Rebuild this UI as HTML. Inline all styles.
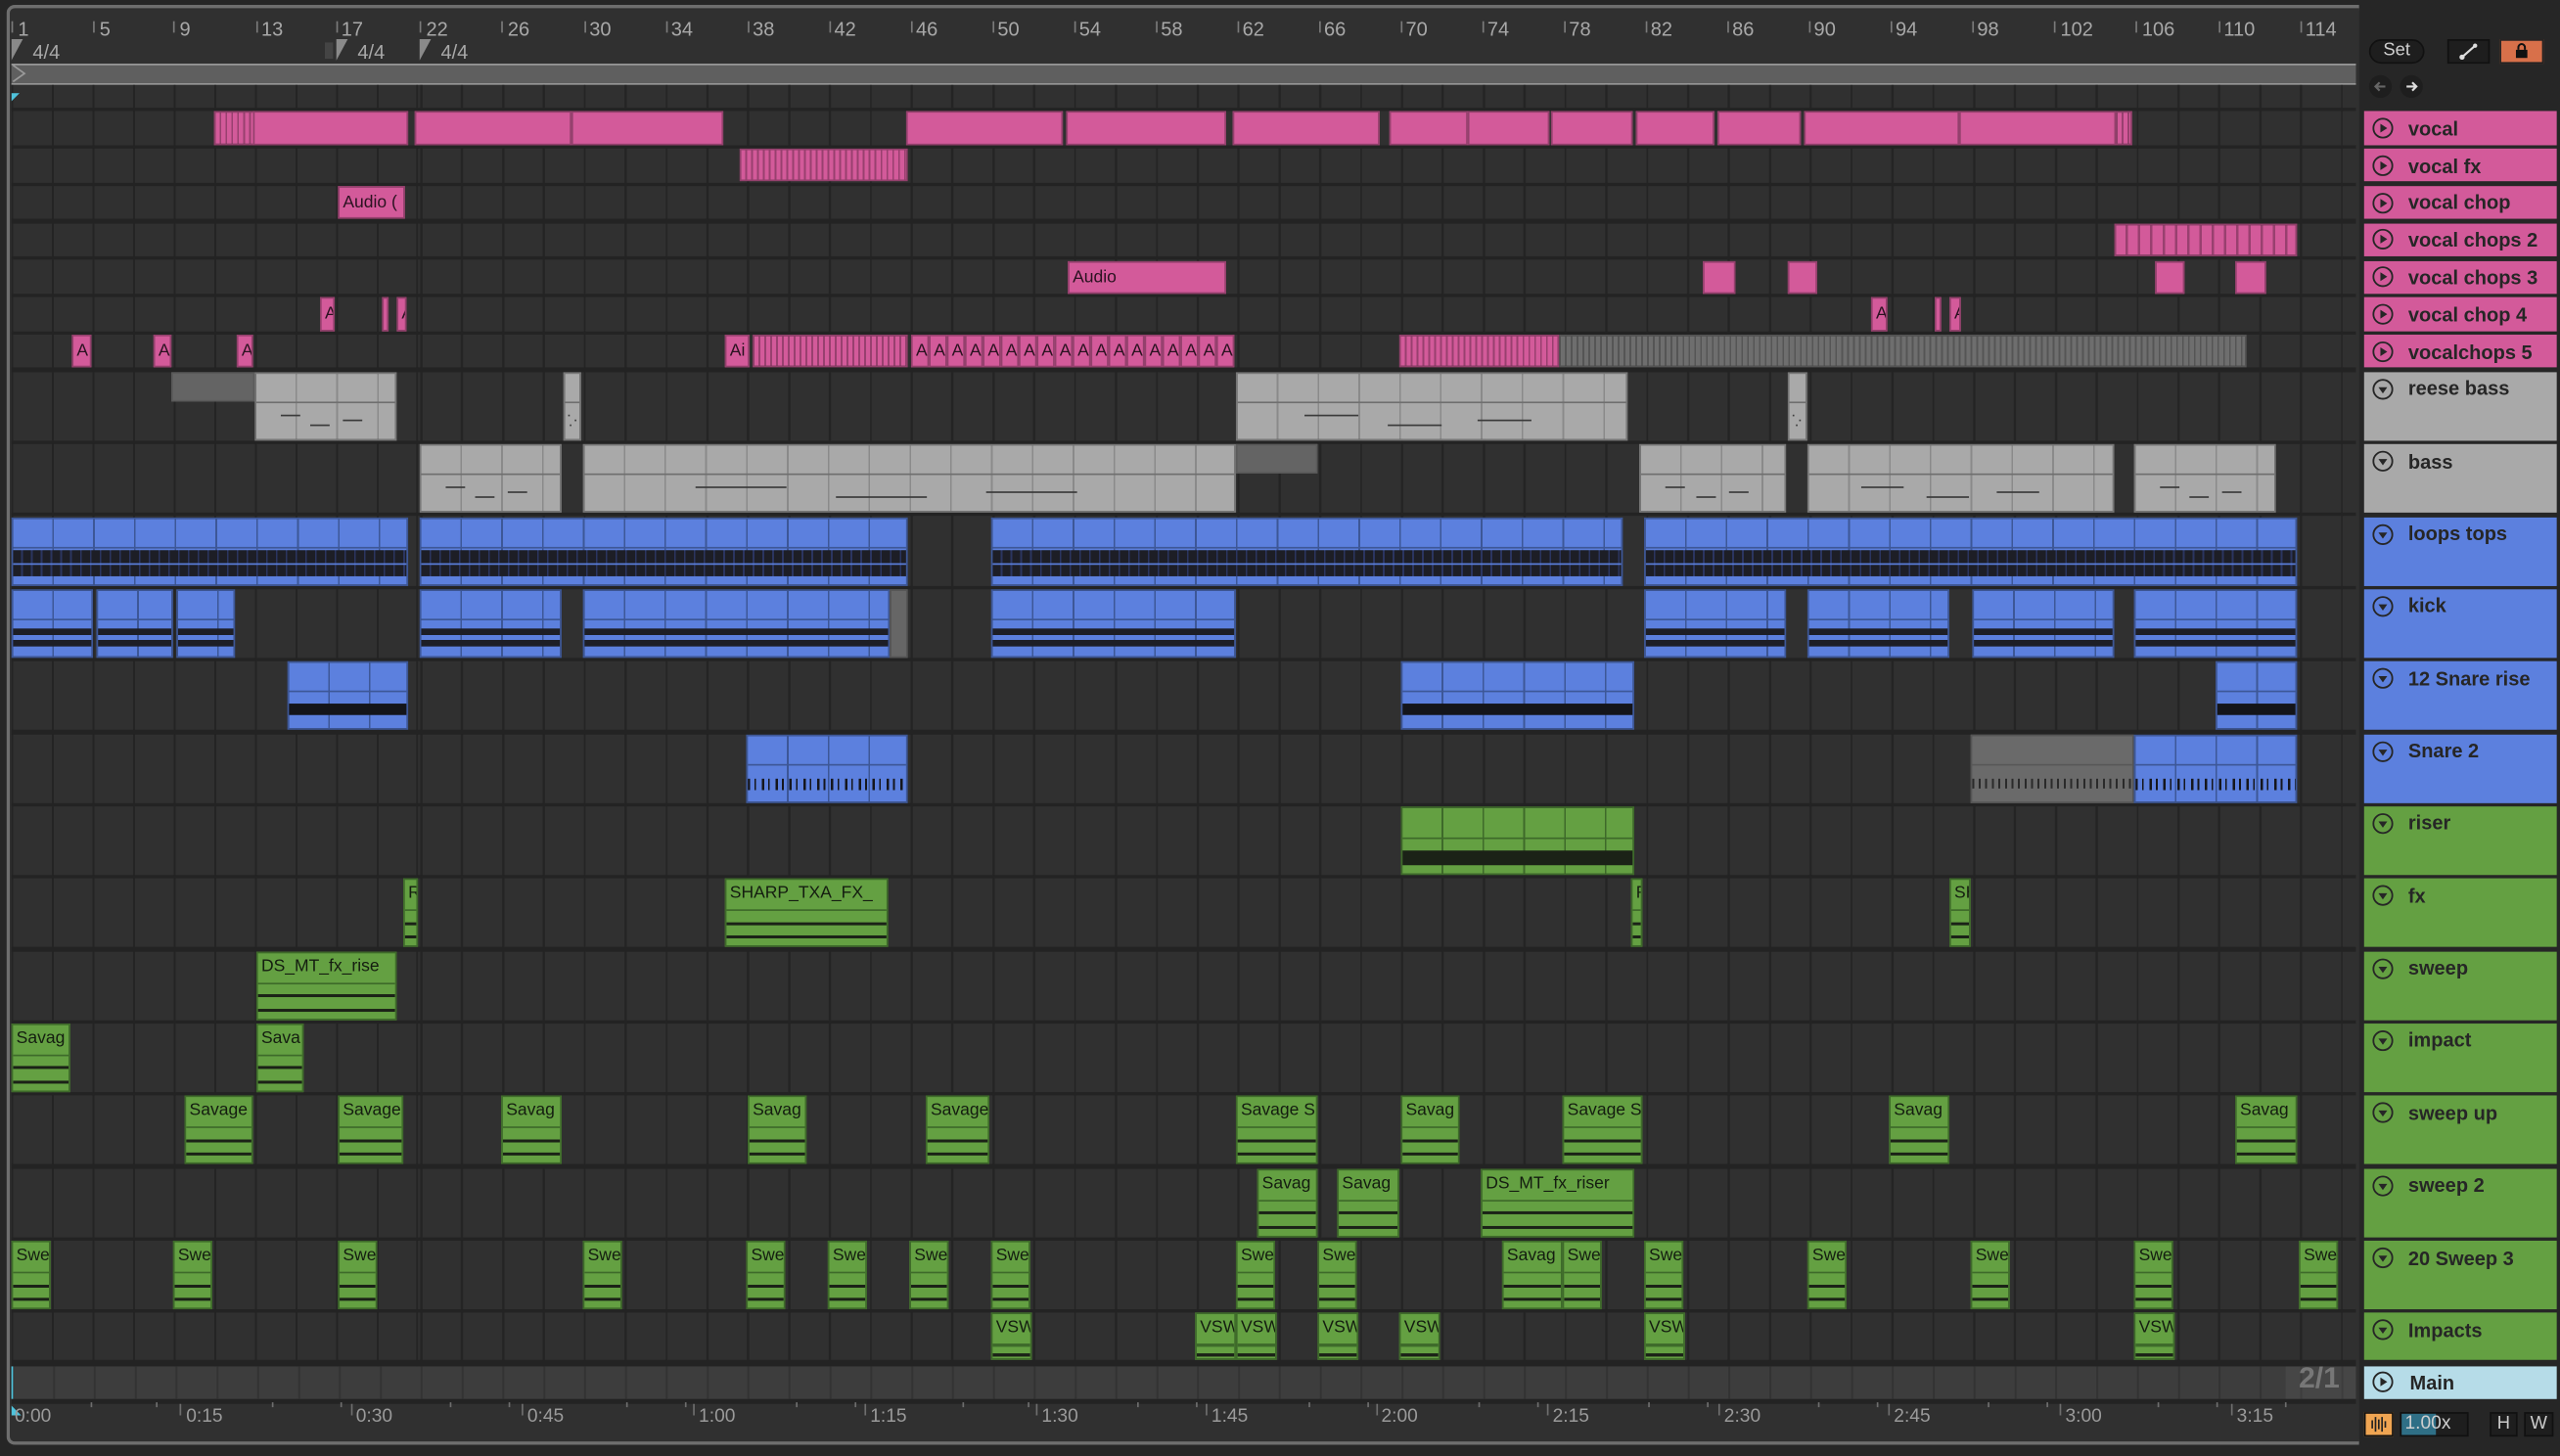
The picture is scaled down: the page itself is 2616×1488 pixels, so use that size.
<!DOCTYPE html>
<html><head><meta charset="utf-8"><style>
html,body{margin:0;padding:0;background:#262626;overflow:hidden}
#w{position:absolute;left:0;top:0;width:1568px;height:892px;transform:scale(1.66837);transform-origin:0 0;font-family:"Liberation Sans",sans-serif;background:#262626}
i{font-style:normal}
.frame{position:absolute;left:4px;top:3px;width:1441px;height:882px;border:2px solid #6e6e6e;border-right:none;border-radius:5px 0 0 5px;background:#303030;box-sizing:border-box}
.gl{position:absolute;top:52px;height:805px;background-color:#303030}
.gA{left:7px;width:248px;background-image:repeating-linear-gradient(90deg,#242424 0 1.2px,transparent 1.2px 24.85px)}
.gB{left:255px;width:1188px;background-image:repeating-linear-gradient(90deg,#242424 0 1.3px,transparent 1.3px 25.03px);background-position:2.4px 0}
.sep{position:absolute;left:7px;width:1436px;height:2.4px;background:#232323}
.r{position:absolute;left:0;width:1443px}
.c{position:absolute;top:0;bottom:0;box-sizing:border-box;overflow:hidden;white-space:nowrap;font-size:10.5px;padding-left:2px}
.c::after,.c::before{content:"";position:absolute;left:0;right:0;display:none}
.p{background:#d35a9a;border:1px solid #93406c;color:#2a1220;line-height:18px}
.ps{background:repeating-linear-gradient(90deg,#d35a9a 0 2.5px,#98406f 2.5px 3.6px);border:1px solid #93406c}
.gs{background:repeating-linear-gradient(90deg,#6e6e6e 0 2.5px,#555 2.5px 3.6px);border:1px solid #555}
.gr{background:linear-gradient(#6f6f6f,#6f6f6f) 0 17px/100% 1.2px no-repeat,linear-gradient(#3a3a3a,#3a3a3a) 20% 25px/14% 1px no-repeat,linear-gradient(#3a3a3a,#3a3a3a) 45% 31px/14% 1px no-repeat,linear-gradient(#3a3a3a,#3a3a3a) 72% 28px/14% 1px no-repeat,repeating-linear-gradient(90deg,#a9a9a9 0 24px,#8a8a8a 24px 25px);border:1px solid #777}
.dg{background:#646464;bottom:auto;height:18px;border:1px solid #5a5a5a}
.b,.k,.sn,.s2{background:repeating-linear-gradient(90deg,#5c80de 0 24px,#3d5797 24px 25px);border:1px solid #3d5797}
.b::before,.k::before,.sn::before,.s2::before,.s2g::before,.g::before,.gri::before{display:block;top:17px;height:1.2px;background:#3d5797}
.g::before,.gri::before{top:18px;background:#3e6a2a}
.s2g::before{background:#585858}
.b::after{display:block;top:19.5px;height:16px;background:linear-gradient(#5c80de,#5c80de) 0 7.5px/100% 1px no-repeat,repeating-linear-gradient(90deg,#1d1e26 0 5px,#2b3560 5px 6px)}
.k::after{display:block;top:23.5px;height:11px;background:linear-gradient(#1d1e26,#1d1e26) 0 0/100% 4px no-repeat,linear-gradient(#1d1e26,#1d1e26) 0 7px/100% 4px no-repeat}
.sn::after{display:block;top:25px;height:7px;background:#14151a}
.s2::after{display:block;top:26px;height:7px;background:repeating-linear-gradient(90deg,#15161c 0 1.5px,transparent 1.5px 4px,#15161c 4px 5px,transparent 5px 8.5px)}
.s2g{background:#6a6a6a;border:1px solid #555}
.s2g::after{display:block;top:26px;height:6px;background:repeating-linear-gradient(90deg,#2a2a2a 0 1.2px,transparent 1.2px 4px)}
.kg{background:#666;border:1px solid #555}
.g{background:#64a042;border:1px solid #3e6a2a;color:#141d10;line-height:17px}
.g::after{display:block;top:25.5px;height:10.5px;background:linear-gradient(#1b2217,#1b2217) 0 0/100% 1.8px no-repeat,linear-gradient(#1b2217,#1b2217) 0 8.5px/100% 1.8px no-repeat}
.gri{background:repeating-linear-gradient(90deg,#64a042 0 24px,#3e6a2a 24px 25px);border:1px solid #3e6a2a}
.gri::after{display:block;top:26px;height:9px;background:#1b2217}
.im .g::after{top:23.5px;height:1.8px;background:#1b2217}
.h{position:absolute;left:1448px;width:118px;box-sizing:border-box;color:#262626;font-size:12px;font-weight:bold}
.h svg{position:absolute;left:5px;width:13px;height:13px}
.h span{position:absolute;left:27px}
.hp{background:#d35a9a}.hg{background:#a9a9a9}.hb{background:#5c80de}.hn{background:#64a042}
.bn{position:absolute;top:11px;font-size:12px;color:#a8a8a8}
.bt{position:absolute;top:13px;width:1px;height:7px;background:#7a7a7a}
.tl{position:absolute;top:862px;font-size:11.5px;color:#9a9a9a}
</style></head><body><div id="w">
<div class="frame"></div>
<div style="position:absolute;left:7px;top:38.5px;width:1436px;height:13px;background:#5f5f5f;border-top:1.3px solid #9a9a9a;border-bottom:1.3px solid #9a9a9a;box-sizing:border-box"></div>
<svg style="position:absolute;left:7px;top:39px" width="10" height="12"><path d="M1 1 L8 6 L1 11" fill="none" stroke="#9a9a9a" stroke-width="1"/></svg>
<div class="gl gA"></div><div class="gl gB"></div>
<div style="position:absolute;left:254.6px;top:52px;width:1px;height:805px;background:#242424"></div>
<div class="sep" style="top:65.9px"></div><div class="sep" style="top:88.7px"></div><div class="sep" style="top:111.5px"></div><div class="sep" style="top:134.3px"></div><div class="sep" style="top:157.1px"></div><div class="sep" style="top:179.9px"></div><div class="sep" style="top:202.7px"></div><div class="sep" style="top:225.4px"></div>
<div class="sep" style="top:269.8px"></div><div class="sep" style="top:314.1px"></div><div class="sep" style="top:358.5px"></div><div class="sep" style="top:402.8px"></div><div class="sep" style="top:447.2px"></div><div class="sep" style="top:491.5px"></div><div class="sep" style="top:535.9px"></div><div class="sep" style="top:580.2px"></div><div class="sep" style="top:624.6px"></div><div class="sep" style="top:668.9px"></div><div class="sep" style="top:713.3px"></div><div class="sep" style="top:757.6px"></div><div class="sep" style="top:802px"></div><div class="sep" style="top:833.2px;height:3.6px"></div>
<div style="position:absolute;left:7px;top:836.8px;width:1436px;height:20.3px;background-color:#3d3d3d;background-image:repeating-linear-gradient(90deg,#333 0 1.2px,transparent 1.2px 25.03px);background-position:0.4px 0"></div>
<div style="position:absolute;left:1400px;top:836.8px;width:43px;height:20.3px;background:rgba(255,255,255,0.05)"></div>
<div style="position:absolute;left:1408px;top:834px;font-size:18px;font-weight:bold;color:#777">2/1</div>
<div style="position:absolute;left:7px;top:836.8px;width:1.3px;height:20.3px;background:#4fc3dc"></div>
<div style="position:absolute;left:7px;top:857.1px;width:1436px;height:2.5px;background:#232323"></div>
<svg style="position:absolute;left:7px;top:57px" width="6" height="6"><path d="M0 0 L5 0 L0 5Z" fill="#4fc3dc"/></svg>
<svg style="position:absolute;left:7px;top:861px" width="7" height="7"><path d="M0 0 L6 6 L0 6Z" fill="#4fc3dc"/></svg>

<div class="bt" style="left:7px"></div><div class="bn" style="left:11px">1</div>
<div class="bt" style="left:57px"></div><div class="bn" style="left:61px">5</div>
<div class="bt" style="left:106px"></div><div class="bn" style="left:110px">9</div>
<div class="bt" style="left:156.6px"></div><div class="bn" style="left:160px">13</div>
<div class="bt" style="left:205.8px"></div><div class="bn" style="left:209px">17</div>
<div class="bt" style="left:257.4px"></div><div class="bn" style="left:261px">22</div>
<div class="bt" style="left:307.4px"></div><div class="bn" style="left:311px">26</div>
<div class="bt" style="left:357.5px"></div><div class="bn" style="left:361px">30</div>
<div class="bt" style="left:407.5px"></div><div class="bn" style="left:411px">34</div>
<div class="bt" style="left:457.6px"></div><div class="bn" style="left:461px">38</div>
<div class="bt" style="left:507.6px"></div><div class="bn" style="left:511px">42</div>
<div class="bt" style="left:557.7px"></div><div class="bn" style="left:561px">46</div>
<div class="bt" style="left:607.7px"></div><div class="bn" style="left:611px">50</div>
<div class="bt" style="left:657.8px"></div><div class="bn" style="left:661px">54</div>
<div class="bt" style="left:707.8px"></div><div class="bn" style="left:711px">58</div>
<div class="bt" style="left:757.9px"></div><div class="bn" style="left:761px">62</div>
<div class="bt" style="left:807.9px"></div><div class="bn" style="left:811px">66</div>
<div class="bt" style="left:858px"></div><div class="bn" style="left:861px">70</div>
<div class="bt" style="left:908px"></div><div class="bn" style="left:911px">74</div>
<div class="bt" style="left:958.1px"></div><div class="bn" style="left:961px">78</div>
<div class="bt" style="left:1008.1px"></div><div class="bn" style="left:1011px">82</div>
<div class="bt" style="left:1058.2px"></div><div class="bn" style="left:1061px">86</div>
<div class="bt" style="left:1108.2px"></div><div class="bn" style="left:1111px">90</div>
<div class="bt" style="left:1158.3px"></div><div class="bn" style="left:1161px">94</div>
<div class="bt" style="left:1208.3px"></div><div class="bn" style="left:1211px">98</div>
<div class="bt" style="left:1258.4px"></div><div class="bn" style="left:1262px">102</div>
<div class="bt" style="left:1308.4px"></div><div class="bn" style="left:1312px">106</div>
<div class="bt" style="left:1358.5px"></div><div class="bn" style="left:1362px">110</div>
<div class="bt" style="left:1408.5px"></div><div class="bn" style="left:1412px">114</div>
<svg style="position:absolute;left:7px;top:24px" width="300" height="14"><path d="M0 0 L7 0 L0 13Z" fill="#8a8a8a"/><path d="M199 0 L206 0 L199 13Z" fill="#8a8a8a"/><path d="M250 0 L257 0 L250 13Z" fill="#8a8a8a"/><path d="M192 2 L197 2 L197 12 L192 12Z" fill="#444"/></svg>
<div class="bn" style="left:20px;top:25px">4/4</div><div class="bn" style="left:219px;top:25px">4/4</div><div class="bn" style="left:270px;top:25px">4/4</div>

<div class="r" style="top:68.3px;height:20.4px">
<i class="c ps" style="left:131px;width:25px"></i><i class="c p" style="left:155px;width:95px"></i><i class="c p" style="left:254px;width:96px"></i><i class="c p" style="left:350px;width:93px"></i><i class="c p" style="left:555px;width:96px"></i><i class="c p" style="left:653px;width:98px"></i><i class="c p" style="left:755px;width:90px"></i><i class="c p" style="left:851px;width:48px"></i><i class="c p" style="left:899px;width:50px"></i><i class="c p" style="left:950px;width:50px"></i><i class="c p" style="left:1002px;width:48px"></i><i class="c p" style="left:1052px;width:51px"></i><i class="c p" style="left:1105px;width:95px"></i><i class="c p" style="left:1200px;width:96px"></i><i class="c ps" style="left:1296px;width:10px"></i></div>
<div class="r" style="top:91.1px;height:20.4px"><i class="c ps" style="left:453px;width:103px"></i></div>
<div class="r" style="top:113.9px;height:20.4px"><i class="c p" style="left:207px;width:41px">Audio (</i></div>
<div class="r" style="top:136.7px;height:20.4px"><i class="c ps" style="left:1295px;width:112px;background:repeating-linear-gradient(90deg,#d35a9a 0 6px,#98406f 6px 7.5px)"></i></div>
<div class="r" style="top:159.5px;height:20.4px"><i class="c p" style="left:654px;width:97px">Audio</i><i class="c p" style="left:1043px;width:20px"></i><i class="c p" style="left:1095px;width:18px"></i><i class="c p" style="left:1320px;width:18px"></i><i class="c p" style="left:1369px;width:19px"></i></div>
<div class="r" style="top:182.2px;height:20.4px"><i class="c p" style="left:196px;width:9px">A</i><i class="c p" style="left:234px;width:4px"></i><i class="c p" style="left:243px;width:6px">A</i><i class="c p" style="left:1146px;width:10px">A</i><i class="c p" style="left:1185px;width:4px"></i><i class="c p" style="left:1194px;width:7px">A</i></div>
<div class="r" style="top:205px;height:20.4px"><i class="c p" style="left:44px;width:12px">A</i><i class="c p" style="left:94px;width:11px">A</i><i class="c p" style="left:145px;width:10px">A</i><i class="c p" style="left:444px;width:15px">Ai</i><i class="c ps" style="left:461px;width:95px"></i>
<i class="c p" style="left:558px;width:11px">A</i><i class="c p" style="left:569px;width:11px">A</i><i class="c p" style="left:580px;width:11px">A</i><i class="c p" style="left:591px;width:11px">A</i><i class="c p" style="left:602px;width:11px">A</i><i class="c p" style="left:613px;width:11px">A</i><i class="c p" style="left:624px;width:11px">A</i><i class="c p" style="left:635px;width:11px">A</i><i class="c p" style="left:646px;width:11px">A</i><i class="c p" style="left:657px;width:11px">A</i><i class="c p" style="left:668px;width:11px">A</i><i class="c p" style="left:679px;width:11px">A</i><i class="c p" style="left:690px;width:11px">A</i><i class="c p" style="left:701px;width:11px">A</i><i class="c p" style="left:712px;width:11px">A</i><i class="c p" style="left:723px;width:11px">A</i><i class="c p" style="left:734px;width:11px">A</i><i class="c p" style="left:745px;width:11px">A</i>
<i class="c ps" style="left:857px;width:98px"></i><i class="c gs" style="left:955px;width:421px"></i></div>
<div class="r" style="top:227.8px;height:42px"><i class="c dg" style="left:105px;width:51px"></i><i class="c gr" style="left:156px;width:87px"></i><i class="c gr" style="left:345px;width:11px"></i><i class="c gr" style="left:757px;width:240px"></i><i class="c gr" style="left:1095px;width:12px"></i></div>
<div class="r" style="top:272.1px;height:42px"><i class="c gr" style="left:257px;width:87px"></i><i class="c gr" style="left:357px;width:400px"></i><i class="c dg" style="left:757px;width:50px"></i><i class="c gr" style="left:1004px;width:90px"></i><i class="c gr" style="left:1107px;width:188px"></i><i class="c gr" style="left:1307px;width:87px"></i></div>
<div class="r" style="top:316.5px;height:42px"><i class="c b" style="left:7px;width:243px"></i><i class="c b" style="left:257px;width:299px"></i><i class="c b" style="left:607px;width:387px"></i><i class="c b" style="left:1007px;width:400px"></i></div>
<div class="r" style="top:360.8px;height:42px"><i class="c k" style="left:7px;width:50px"></i><i class="c k" style="left:59px;width:47px"></i><i class="c k" style="left:108px;width:36px"></i><i class="c k" style="left:257px;width:87px"></i><i class="c k" style="left:357px;width:188px"></i><i class="c kg" style="left:545px;width:11px"></i><i class="c k" style="left:607px;width:150px"></i><i class="c k" style="left:1007px;width:87px"></i><i class="c k" style="left:1107px;width:87px"></i><i class="c k" style="left:1208px;width:87px"></i><i class="c k" style="left:1307px;width:100px"></i></div>
<div class="r" style="top:405.2px;height:42px"><i class="c sn" style="left:176px;width:74px"></i><i class="c sn" style="left:858px;width:143px"></i><i class="c sn" style="left:1357px;width:50px"></i></div>
<div class="r" style="top:449.5px;height:42px"><i class="c s2" style="left:457px;width:99px"></i><i class="c s2g" style="left:1207px;width:100px"></i><i class="c s2" style="left:1307px;width:100px"></i></div>
<div class="r" style="top:493.9px;height:42px"><i class="c gri" style="left:858px;width:143px"></i></div>
<div class="r" style="top:538.2px;height:42px"><i class="c g" style="left:247px;width:9px">R</i><i class="c g" style="left:444px;width:100px">SHARP_TXA_FX_</i><i class="c g" style="left:999px;width:7px">R</i><i class="c g" style="left:1194px;width:13px">SH</i></div>
<div class="r" style="top:582.6px;height:42px"><i class="c g" style="left:157px;width:86px">DS_MT_fx_rise</i></div>
<div class="r" style="top:626.9px;height:42px"><i class="c g" style="left:7px;width:36px">Savag</i><i class="c g" style="left:157px;width:29px">Sava</i></div>
<div class="r" style="top:671.3px;height:42px"><i class="c g" style="left:113px;width:42px">Savage</i><i class="c g" style="left:207px;width:40px">Savage</i><i class="c g" style="left:307px;width:37px">Savag</i><i class="c g" style="left:458px;width:36px">Savag</i><i class="c g" style="left:567px;width:39px">Savage</i><i class="c g" style="left:757px;width:50px">Savage S</i><i class="c g" style="left:858px;width:36px">Savag</i><i class="c g" style="left:957px;width:49px">Savage S</i><i class="c g" style="left:1157px;width:37px">Savag</i><i class="c g" style="left:1369px;width:38px">Savag</i></div>
<div class="r" style="top:715.7px;height:42px"><i class="c g" style="left:770px;width:37px">Savag</i><i class="c g" style="left:819px;width:38px">Savag</i><i class="c g" style="left:907px;width:94px">DS_MT_fx_riser</i></div>
<div class="r" style="top:760px;height:42px"><i class="c g" style="left:7px;width:24px">Swe</i><i class="c g" style="left:106px;width:24px">Swe</i><i class="c g" style="left:207px;width:24px">Swe</i><i class="c g" style="left:357px;width:24px">Swe</i><i class="c g" style="left:457px;width:24px">Swe</i><i class="c g" style="left:507px;width:24px">Swe</i><i class="c g" style="left:557px;width:24px">Swe</i><i class="c g" style="left:607px;width:24px">Swe</i><i class="c g" style="left:757px;width:24px">Swe</i><i class="c g" style="left:807px;width:24px">Swe</i><i class="c g" style="left:920px;width:37px">Savag</i><i class="c g" style="left:957px;width:24px">Swe</i><i class="c g" style="left:1007px;width:24px">Swe</i><i class="c g" style="left:1107px;width:24px">Swe</i><i class="c g" style="left:1207px;width:24px">Swe</i><i class="c g" style="left:1307px;width:24px">Swe</i><i class="c g" style="left:1408px;width:24px">Swe</i></div>
<div class="r im" style="top:804.4px;height:28.8px"><i class="c g" style="left:607px;width:25px">VSW</i><i class="c g" style="left:732px;width:25px">VSW</i><i class="c g" style="left:757px;width:25px">VSW</i><i class="c g" style="left:807px;width:25px">VSW</i><i class="c g" style="left:857px;width:25px">VSW</i><i class="c g" style="left:1007px;width:25px">VSW</i><i class="c g" style="left:1307px;width:25px">VSW</i></div>

<svg width="0" height="0" style="position:absolute"><defs>
<symbol id="pl" viewBox="0 0 13 13"><circle cx="6.5" cy="6.5" r="5.8" fill="none" stroke="#262626" stroke-width="1.1"/><path d="M5 3.8 L9.2 6.5 L5 9.2Z" fill="#262626"/></symbol>
<symbol id="dn" viewBox="0 0 13 13"><circle cx="6.5" cy="6.5" r="5.8" fill="none" stroke="#262626" stroke-width="1.1"/><path d="M3.8 5.2 L9.2 5.2 L6.5 9Z" fill="#262626"/></symbol>
</defs></svg>
<div class="h hp" style="top:68.3px;height:20.4px"><svg style="top:3.7px"><use href="#pl"/></svg><span style="top:3.5px">vocal</span></div>
<div class="h hp" style="top:91.1px;height:20.4px"><svg style="top:3.7px"><use href="#pl"/></svg><span style="top:3.5px">vocal fx</span></div>
<div class="h hp" style="top:113.9px;height:20.4px"><svg style="top:3.7px"><use href="#pl"/></svg><span style="top:3.5px">vocal chop</span></div>
<div class="h hp" style="top:136.7px;height:20.4px"><svg style="top:3.7px"><use href="#pl"/></svg><span style="top:3.5px">vocal chops 2</span></div>
<div class="h hp" style="top:159.5px;height:20.4px"><svg style="top:3.7px"><use href="#pl"/></svg><span style="top:3.5px">vocal chops 3</span></div>
<div class="h hp" style="top:182.2px;height:20.4px"><svg style="top:3.7px"><use href="#pl"/></svg><span style="top:3.5px">vocal chop 4</span></div>
<div class="h hp" style="top:205px;height:20.4px"><svg style="top:3.7px"><use href="#pl"/></svg><span style="top:3.5px">vocalchops 5</span></div>
<div class="h hg" style="top:227.8px;height:42px"><svg style="top:4px"><use href="#dn"/></svg><span style="top:3.5px">reese bass</span></div>
<div class="h hg" style="top:272.1px;height:42px"><svg style="top:4px"><use href="#dn"/></svg><span style="top:3.5px">bass</span></div>
<div class="h hb" style="top:316.5px;height:42px"><svg style="top:4px"><use href="#dn"/></svg><span style="top:3.5px">loops tops</span></div>
<div class="h hb" style="top:360.8px;height:42px"><svg style="top:4px"><use href="#dn"/></svg><span style="top:3.5px">kick</span></div>
<div class="h hb" style="top:405.2px;height:42px"><svg style="top:4px"><use href="#dn"/></svg><span style="top:3.5px">12 Snare rise</span></div>
<div class="h hb" style="top:449.5px;height:42px"><svg style="top:4px"><use href="#dn"/></svg><span style="top:3.5px">Snare 2</span></div>
<div class="h hn" style="top:493.9px;height:42px"><svg style="top:4px"><use href="#dn"/></svg><span style="top:3.5px">riser</span></div>
<div class="h hn" style="top:538.2px;height:42px"><svg style="top:4px"><use href="#dn"/></svg><span style="top:3.5px">fx</span></div>
<div class="h hn" style="top:582.6px;height:42px"><svg style="top:4px"><use href="#dn"/></svg><span style="top:3.5px">sweep</span></div>
<div class="h hn" style="top:626.9px;height:42px"><svg style="top:4px"><use href="#dn"/></svg><span style="top:3.5px">impact</span></div>
<div class="h hn" style="top:671.3px;height:42px"><svg style="top:4px"><use href="#dn"/></svg><span style="top:3.5px">sweep up</span></div>
<div class="h hn" style="top:715.7px;height:42px"><svg style="top:4px"><use href="#dn"/></svg><span style="top:3.5px">sweep 2</span></div>
<div class="h hn" style="top:760px;height:42px"><svg style="top:4px"><use href="#dn"/></svg><span style="top:3.5px">20 Sweep 3</span></div>
<div class="h hn" style="top:804.4px;height:28.8px"><svg style="top:4px"><use href="#dn"/></svg><span style="top:3.5px">Impacts</span></div>
<div class="h" style="top:836.8px;height:20.3px;background:#b6dce8"><svg style="top:3.7px"><use href="#pl"/></svg><span style="top:3.5px;left:28px">Main</span></div>

<div style="position:absolute;left:1451px;top:24px;width:34px;height:15px;border-radius:8px;background:#1e1e1e;border:1px solid #111;box-sizing:border-box;color:#cfcfcf;font-size:11px;text-align:center;line-height:13px">Set</div>
<div style="position:absolute;left:1499px;top:24px;width:26px;height:15px;background:#1e1e1e;border:1px solid #111;box-sizing:border-box"><svg width="24" height="13"><path d="M8 10 L16 3" stroke="#ddd" stroke-width="1.3"/><circle cx="8" cy="10" r="1.6" fill="#ddd"/><circle cx="16" cy="3" r="1.3" fill="#ddd"/></svg></div>
<div style="position:absolute;left:1531px;top:24px;width:27px;height:15px;background:#d8704a;border:1px solid #222;box-sizing:border-box"><svg width="25" height="13"><rect x="9" y="5.5" width="7" height="5" fill="#111"/><path d="M10.5 5.5 V4 a2 2 0 0 1 4 0 V5.5" fill="none" stroke="#111" stroke-width="1.2"/></svg></div>
<div style="position:absolute;left:1451px;top:45.5px;width:14px;height:14px;border-radius:50%;background:#1e1e1e"><svg width="14" height="14"><path d="M10 7 H4 M6.5 4.5 L4 7 L6.5 9.5" stroke="#666" stroke-width="1.3" fill="none"/></svg></div>
<div style="position:absolute;left:1470px;top:45.5px;width:14px;height:14px;border-radius:50%;background:#1e1e1e"><svg width="14" height="14"><path d="M4 7 H10 M7.5 4.5 L10 7 L7.5 9.5" stroke="#ddd" stroke-width="1.3" fill="none"/></svg></div>

<svg style="position:absolute;left:0;top:857px" width="1443" height="10">
<g stroke="#6e6e6e" stroke-width="1"><path d="M56 2v3M96 2v3M167 2v3M209 2v3M276 2v3M312 2v3M384 2v3M420 2v3M488 2v3M524 2v3M590 2v3M630 2v3M697 2v3M733 2v3M802 2v3M838 2v3M906 2v3M942 2v3M1010 2v3M1046 2v3M1114 2v3M1150 2v3M1218 2v3M1254 2v3M1322 2v3M1358 2v3M1400 2v3"/><path d="M110.5 3v7M215.5 3v7M320 3v7M425 3v7M530 3v7M635 3v7M739 3v7M843.5 3v7M948 3v7M1053 3v7M1157 3v7M1262 3v7M1367 3v7"/></g></svg>
<div class="tl" style="left:9px">0:00</div><div class="tl" style="left:114px">0:15</div><div class="tl" style="left:218px">0:30</div><div class="tl" style="left:323px">0:45</div><div class="tl" style="left:428px">1:00</div><div class="tl" style="left:533px">1:15</div><div class="tl" style="left:638px">1:30</div><div class="tl" style="left:742px">1:45</div><div class="tl" style="left:846px">2:00</div><div class="tl" style="left:951px">2:15</div><div class="tl" style="left:1056px">2:30</div><div class="tl" style="left:1160px">2:45</div><div class="tl" style="left:1265px">3:00</div><div class="tl" style="left:1370px">3:15</div>

<div style="position:absolute;left:1448px;top:864.5px;width:18px;height:15px;background:#f0a552;border:1px solid #111;box-sizing:border-box"><svg width="16" height="13"><g stroke="#222" stroke-width="1"><path d="M4 4v5M6 2v9M8 3.5v6M10 2v9M12 4.5v4"/></g></svg></div>
<div style="position:absolute;left:1470px;top:864.5px;width:42px;height:15px;background:#1e1e1e;border:1px solid #111;box-sizing:border-box"><div style="position:absolute;left:0;top:0;width:21px;height:13px;background:#2f6f86"></div><span style="position:absolute;left:2px;top:0;font-size:11.5px;color:#cfcfcf">1.00x</span></div>
<div style="position:absolute;left:1525px;top:864.5px;width:17px;height:15px;background:#1e1e1e;border:1px solid #111;box-sizing:border-box;color:#ccc;font-size:11px;text-align:center;line-height:13px">H</div>
<div style="position:absolute;left:1546px;top:864.5px;width:18px;height:15px;background:#1e1e1e;border:1px solid #111;box-sizing:border-box;color:#ccc;font-size:11px;text-align:center;line-height:13px">W</div>
</div></body></html>
